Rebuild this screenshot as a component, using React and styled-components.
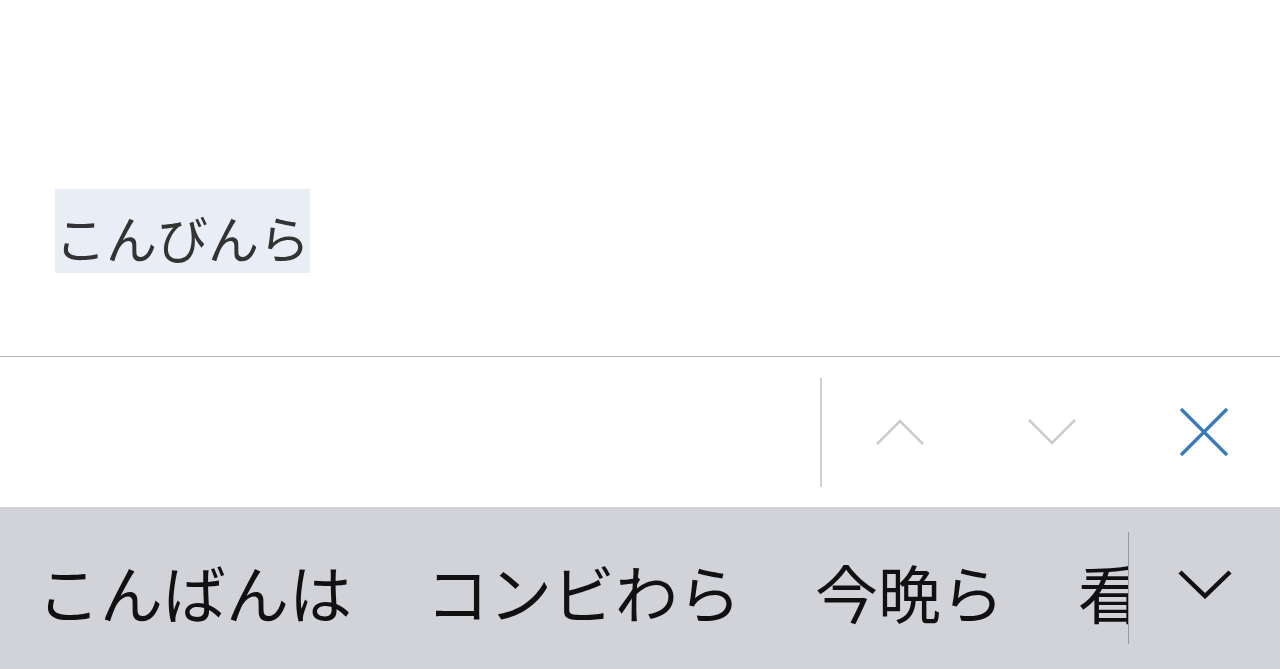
import styled, { createGlobalStyle } from 'styled-components';

const GlobalStyle = createGlobalStyle`
	html, body {
		margin: 0;
		padding: 0;
		background: #ffffff;
	}
	body {
		font-family: "Noto Sans CJK JP", "Noto Sans", sans-serif;
	}
`

const Screen = styled.div`
	width: 1280px;
	height: 669px;
	display: flex;
	flex-direction: column;
	overflow: hidden;
	background: #ffffff;
`

const Page = styled.div`
	height: 357px;
	padding: 189px 0 0 55px;
	box-sizing: border-box;
	border-bottom: 1px solid #b9b9b9;
`

const Match = styled.span`
	display: inline-block;
	box-sizing: border-box;
	height: 84px;
	padding-top: 12px;
	line-height: 72px;
	background: #e9eef6;
	color: #333333;
	font-size: 51px;
`

const FindBar = styled.div`
	height: 150px;
	display: flex;
	align-items: center;
	justify-content: flex-end;
`

const Divider = styled.div`
	width: 2px;
	height: 109px;
	background: #d0d0d0;
	margin-right: 2px;
`

const NavButton = styled.button`
	width: 152px;
	height: 150px;
	border: none;
	background: transparent;
	padding: 0;
	display: flex;
	align-items: center;
	justify-content: center;
	cursor: pointer;
`

const Candidates = styled.div`
	height: 162px;
	background: #d2d3d8;
	display: flex;
	align-items: center;
`

const CandidateList = styled.div`
	width: 1128px;
	height: 100%;
	display: flex;
	align-items: center;
	overflow: hidden;
	flex-shrink: 0;
`

const Candidate = styled.span`
	padding: 0 37px;
	font-size: 63px;
	color: #111111;
	white-space: nowrap;
	flex-shrink: 0;
	line-height: 1;
	margin-top: 4px;
`

const ListEdge = styled.div`
	width: 1px;
	height: 112px;
	background: #9a9ba0;
`

const ExpandButton = styled.button`
	flex: 1;
	height: 100%;
	border: none;
	background: transparent;
	display: flex;
	align-items: center;
	justify-content: center;
	padding: 0 0 8px 0;
`

const candidates = ['こんばんは', 'コンビわら', '今晩ら', '看']

export default function App() {
	return (
		<Screen>
			<GlobalStyle />
			<Page>
				<Match>こんびんら</Match>
			</Page>
			<FindBar>
				<Divider />
				<NavButton aria-label="前へ">
					<svg width="50" height="28" viewBox="0 0 50 28">
						<polyline points="2,26 25,3 48,26" fill="none" stroke="#cccccc" strokeWidth="2.5" />
					</svg>
				</NavButton>
				<NavButton aria-label="次へ">
					<svg width="50" height="28" viewBox="0 0 50 28">
						<polyline points="2,2 25,25 48,2" fill="none" stroke="#cccccc" strokeWidth="2.5" />
					</svg>
				</NavButton>
				<NavButton aria-label="閉じる">
					<svg width="50" height="50" viewBox="0 0 50 50">
						<path d="M2 2 L48 48 M48 2 L2 48" fill="none" stroke="#3a7bb7" strokeWidth="3.2" />
					</svg>
				</NavButton>
			</FindBar>
			<Candidates>
				<CandidateList>
					{candidates.map((c) => (
						<Candidate key={c}>{c}</Candidate>
					))}
				</CandidateList>
				<ListEdge />
				<ExpandButton aria-label="候補を表示">
					<svg width="56" height="30" viewBox="0 0 56 30">
						<polyline points="3,3 28,27 53,3" fill="none" stroke="#111111" strokeWidth="4.5" />
					</svg>
				</ExpandButton>
			</Candidates>
		</Screen>
	)
}
